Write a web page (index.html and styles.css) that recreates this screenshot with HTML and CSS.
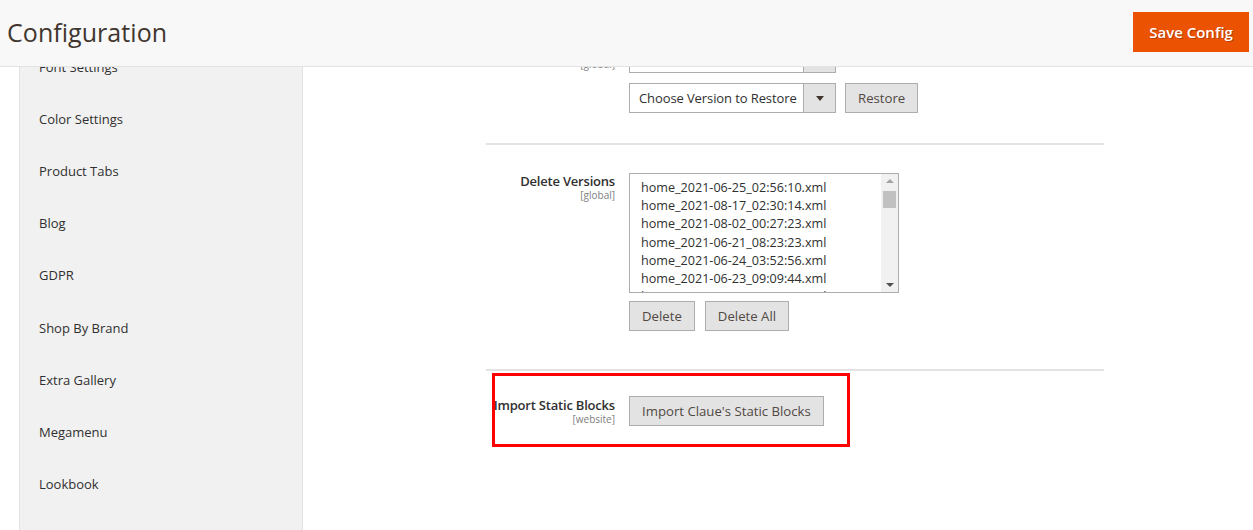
FILE: index.html
```html
<!DOCTYPE html>
<html>
<head>
<meta charset="utf-8">
<link rel="stylesheet" href="styles.css">
</head>
<body>
<header class="page-header">
  <h1 class="page-title">Configuration</h1>
  <button class="btn-primary">Save Config</button>
</header>
<div class="page">
  <nav class="sidebar">
    <a class="nav-item">Font Settings</a>
    <a class="nav-item">Color Settings</a>
    <a class="nav-item">Product Tabs</a>
    <a class="nav-item">Blog</a>
    <a class="nav-item">GDPR</a>
    <a class="nav-item">Shop By Brand</a>
    <a class="nav-item">Extra Gallery</a>
    <a class="nav-item">Megamenu</a>
    <a class="nav-item">Lookbook</a>
  </nav>
  <main class="content">
    <section class="group group-first">
      <div class="row">
        <div class="label"><span class="label-text">Restore Version</span><span class="scope">[global]</span></div>
        <div class="control">
          <div class="select"><span class="select-text"></span><span class="select-arrow"><span class="tri"></span></span></div>
        </div>
      </div>
      <div class="row">
        <div class="label"></div>
        <div class="control inline">
          <div class="select"><span class="select-text">Choose Version to Restore</span><span class="select-arrow"><span class="tri"></span></span></div>
          <button class="btn">Restore</button>
        </div>
      </div>
    </section>
    <section class="group group-delete">
      <div class="row">
        <div class="label"><span class="label-text">Delete Versions</span><span class="scope">[global]</span></div>
        <div class="control">
          <div class="listbox">
            <ul class="options">
              <li>home_2021-06-25_02:56:10.xml</li>
              <li>home_2021-08-17_02:30:14.xml</li>
              <li>home_2021-08-02_00:27:23.xml</li>
              <li>home_2021-06-21_08:23:23.xml</li>
              <li>home_2021-06-24_03:52:56.xml</li>
              <li>home_2021-06-23_09:09:44.xml</li>
              <li>home_2021-06-24_03:56:30.xml</li>
            </ul>
            <div class="scrollbar">
              <span class="sb-up"></span>
              <span class="sb-thumb"></span>
              <span class="sb-down"></span>
            </div>
          </div>
          <div class="btn-row">
            <button class="btn">Delete</button>
            <button class="btn">Delete All</button>
          </div>
        </div>
      </div>
    </section>
    <section class="group group-import">
      <div class="row row-import">
        <div class="label"><span class="label-text">Import Static Blocks</span><span class="scope">[website]</span></div>
        <div class="control">
          <button class="btn">Import Claue's Static Blocks</button>
        </div>
        <div class="highlight"></div>
      </div>
    </section>
  </main>
</div>
</body>
</html>
```

FILE: styles.css
```css
* { box-sizing: border-box; }
html, body { margin: 0; padding: 0; }
body {
  font-family: "Open Sans", "Liberation Sans", sans-serif;
  color: #303030;
  background: #fff;
  width: 1253px;
  height: 530px;
  overflow: hidden;
}
.page-header {
  position: fixed;
  top: 0; left: 0; right: 0;
  height: 67px;
  background: #f8f8f8;
  border-bottom: 1px solid #e3e3e3;
  display: flex;
  align-items: center;
  justify-content: space-between;
  padding: 0 4px 0 7px;
  z-index: 10;
}
.page-title {
  margin: 0 0 2px 0;
  font-weight: 400;
  font-size: 25px;
  color: #41362f;
  letter-spacing: 0.05px;
}
.btn-primary {
  font-family: "Open Sans", "Liberation Sans", sans-serif;
  background: #eb5202;
  border: 1px solid #eb5202;
  color: #fff;
  font-size: 15px;
  font-weight: 600;
  text-shadow: 1px 1px 0 rgba(0,0,0,0.25);
  width: 116px;
  height: 40px;
  padding: 0;
  margin: 0 0 2px 0;
}
.page {
  display: flex;
  align-items: stretch;
  min-height: 530px;
}
.sidebar {
  margin-left: 19px;
  width: 284px;
  background: #f1f1f1;
  border-left: 1px solid #e3e3e3;
  border-right: 1px solid #e3e3e3;
  padding-top: 41px;
  display: flex;
  flex-direction: column;
}
.nav-item {
  display: flex;
  align-items: center;
  height: 52.1px;
  flex-shrink: 0;
  padding-left: 19px;
  font-size: 13px;
  color: #303030;
}
.content {
  margin-left: 183px;
  width: 618px;
}
.group { border-bottom: 2px solid #e3e3e3; }
.group-first { padding-top: 43px; padding-bottom: 30px; }
.group-delete { padding-top: 28px; padding-bottom: 38px; }
.group-import { border-bottom: none; padding-top: 25px; }
.row { display: flex; align-items: flex-start; }
.group-first .row + .row { margin-top: 10px; }
.label {
  width: 143px;
  flex-shrink: 0;
  padding-right: 14px;
  text-align: right;
  display: flex;
  flex-direction: column;
  align-items: flex-end;
}
.label-text {
  font-size: 13px;
  font-weight: 600;
  color: #303030;
  line-height: 17px;
  letter-spacing: -0.2px;
  white-space: nowrap;
}
.scope {
  font-size: 10px;
  color: #808080;
  line-height: 12px;
  margin-top: -1px;
}
.group-first .label { margin-top: -1px; }
.control { display: flex; flex-direction: column; }
.control.inline { flex-direction: row; gap: 9px; }
.select {
  width: 207px;
  height: 30px;
  border: 1px solid #adadad;
  background: #fff;
  display: flex;
  align-items: stretch;
}
.select-text {
  flex: 1;
  font-size: 13px;
  color: #303030;
  padding-left: 9px;
  line-height: 28px;
  letter-spacing: -0.1px;
  white-space: nowrap;
  overflow: hidden;
}
.select-arrow {
  width: 32px;
  background: #e3e3e3;
  border-left: 1px solid #adadad;
  display: flex;
  align-items: center;
  justify-content: center;
}
.tri {
  width: 0; height: 0;
  border-left: 4px solid transparent;
  border-right: 4px solid transparent;
  border-top: 5px solid #41362f;
}
.btn {
  font-family: "Open Sans", "Liberation Sans", sans-serif;
  height: 30px;
  background: #e3e3e3;
  border: 1px solid #adadad;
  color: #514943;
  font-size: 13.2px;
  font-weight: 500;
  padding: 0 12px;
  margin: 0;
}
.group-delete .label { padding-top: 0; }
.listbox {
  width: 270px;
  height: 120px;
  border: 1px solid #adadad;
  display: flex;
  overflow: hidden;
  background: #fff;
}
.options {
  list-style: none;
  margin: 0;
  padding: 5px 0 0 11px;
  flex: 1;
  font-size: 12.6px;
  line-height: 18.2px;
  color: #303030;
}
.scrollbar {
  width: 17px;
  background: #f1f1f1;
  position: relative;
}
.sb-up {
  position: absolute;
  top: 5px; left: 5px;
  width: 0; height: 0;
  border-left: 4px solid transparent;
  border-right: 4px solid transparent;
  border-bottom: 4px solid #a3a3a3;
}
.sb-thumb {
  position: absolute;
  top: 17px; left: 2px;
  width: 13px; height: 17px;
  background: #c1c1c1;
}
.sb-down {
  position: absolute;
  bottom: 5px; left: 5px;
  width: 0; height: 0;
  border-left: 4px solid transparent;
  border-right: 4px solid transparent;
  border-top: 4px solid #505050;
}
.btn-row { display: flex; gap: 10px; margin-top: 8px; }
.row-import { position: relative; }
.row-import .label { padding-top: 1px; }
.highlight {
  position: absolute;
  left: 6px;
  top: -23px;
  width: 358px;
  height: 74px;
  border: 3px solid #ff0000;
  pointer-events: none;
}
```
